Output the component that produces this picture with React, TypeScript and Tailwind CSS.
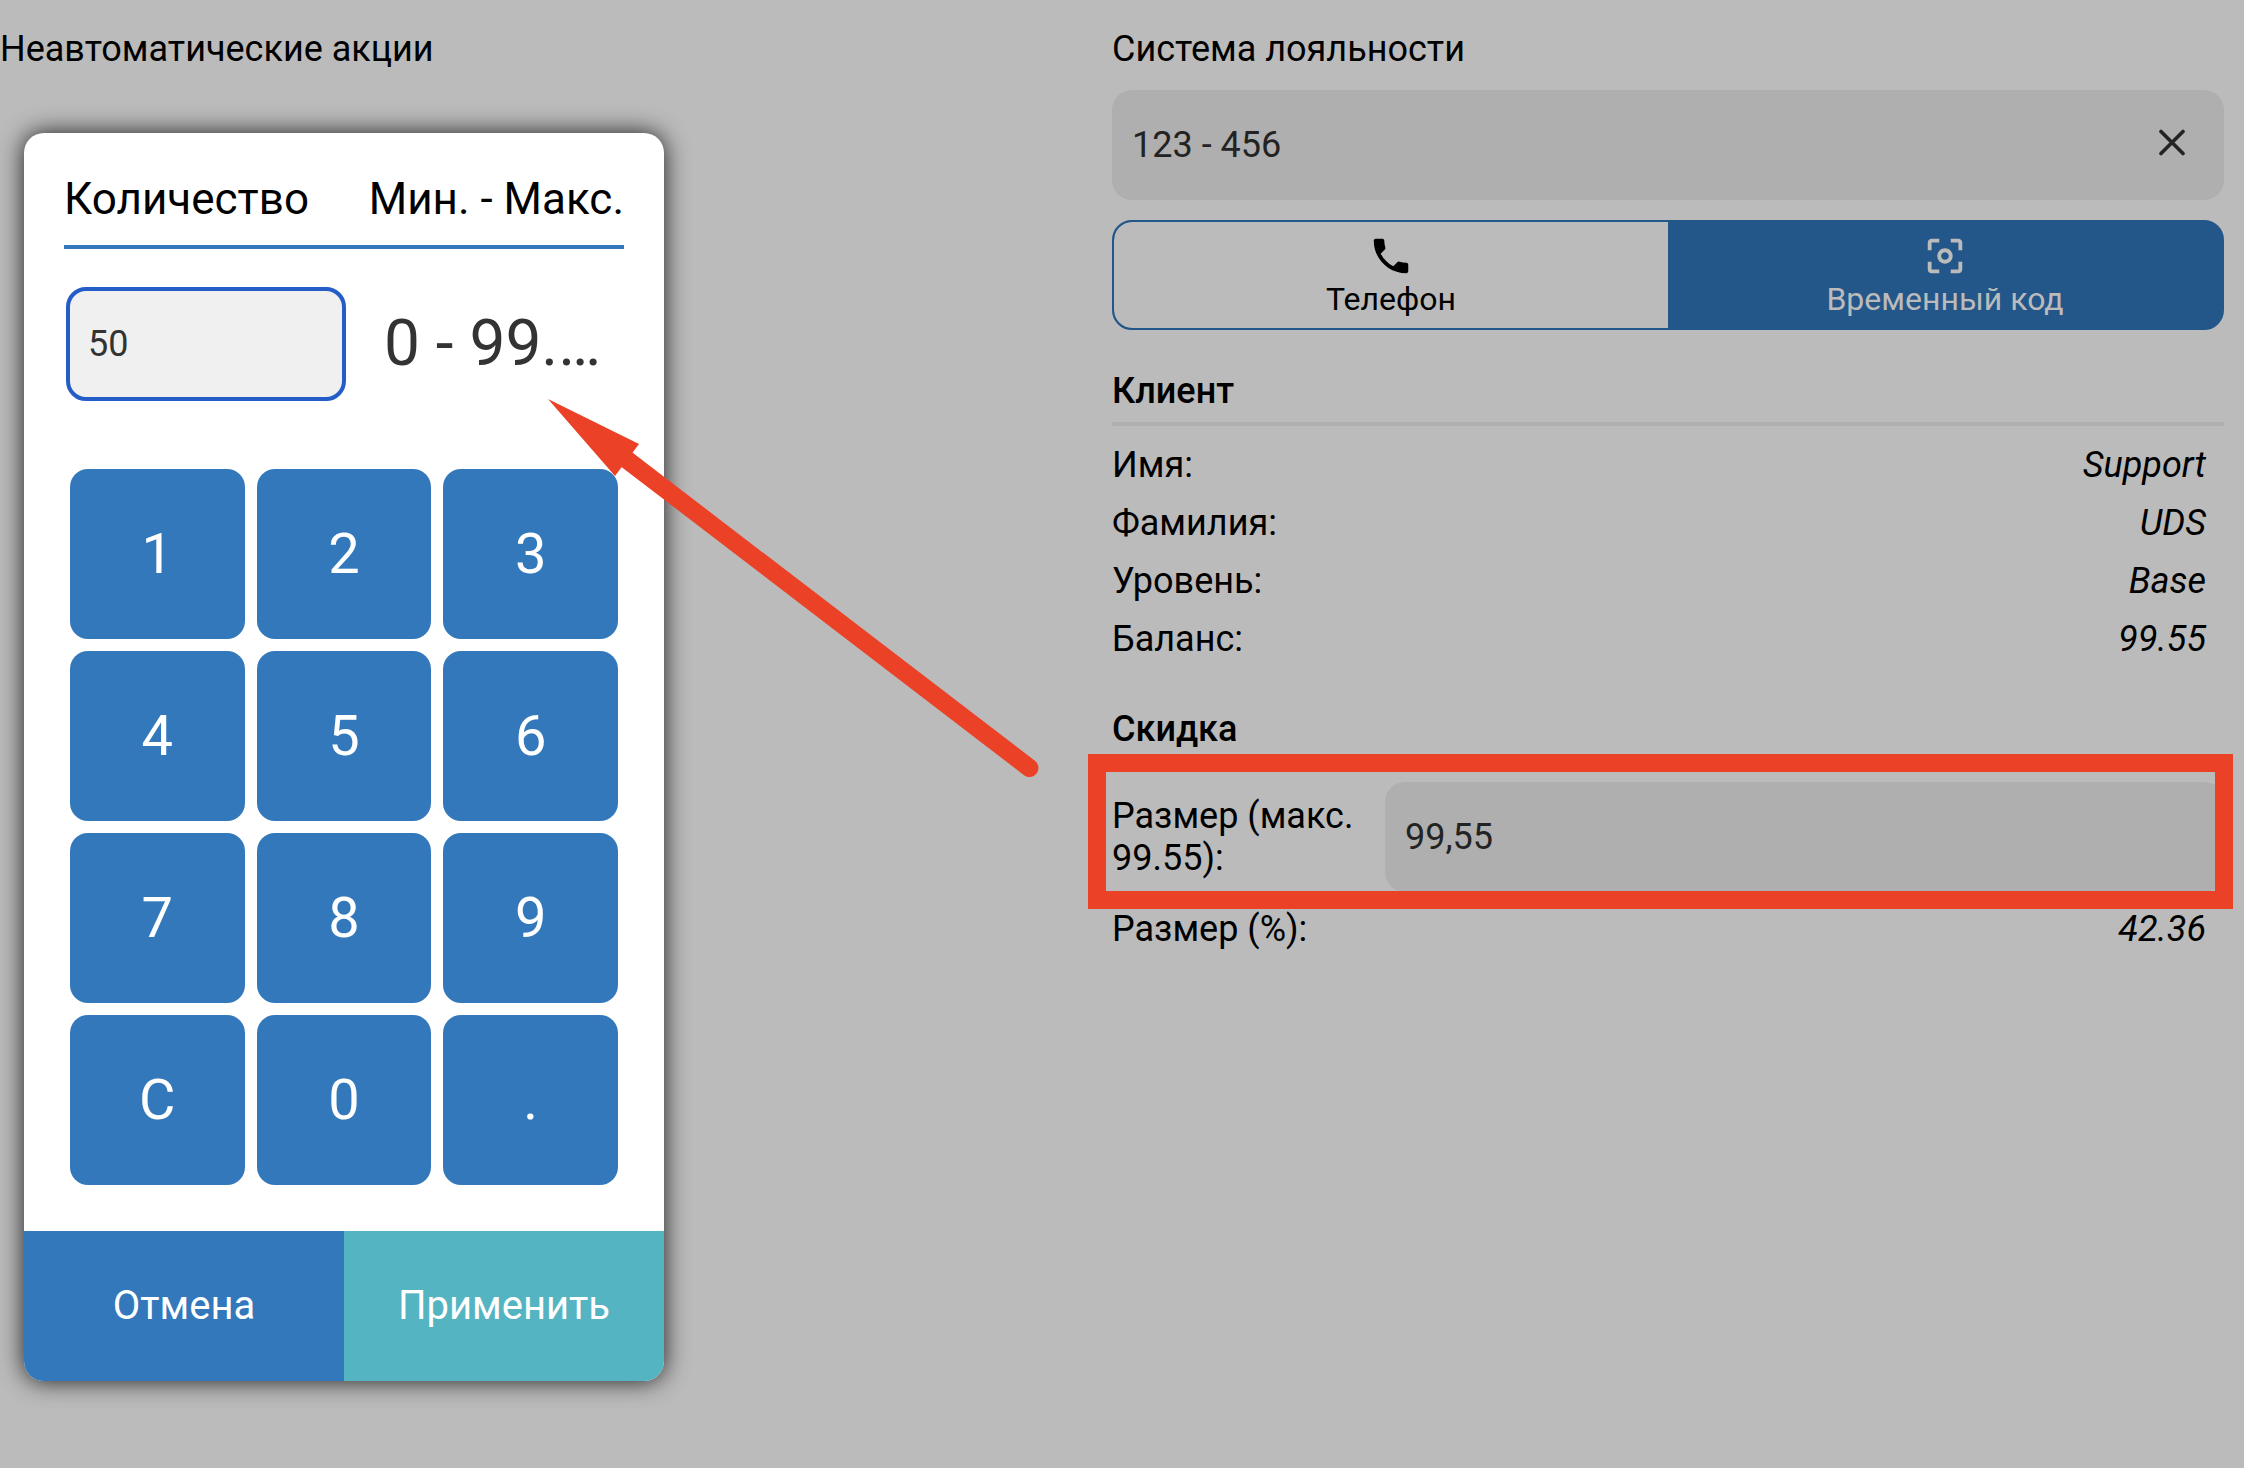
/**
 * Loyalty discount screen
 *
 * Shows the loyalty panel with client details and the quantity keypad
 * dialog that is opened over it.
 */

import React, { useState } from 'react';

interface DetailRowProps {
  label: string;
  value: string;
}

const KEYS = ['1', '2', '3', '4', '5', '6', '7', '8', '9', 'C', '0', '.'];

const CLIENT_ROWS: DetailRowProps[] = [
  { label: 'Имя:', value: 'Support' },
  { label: 'Фамилия:', value: 'UDS' },
  { label: 'Уровень:', value: 'Base' },
  { label: 'Баланс:', value: '99.55' },
];

const DetailRow: React.FC<DetailRowProps> = ({ label, value }) => (
  <div className="flex justify-between py-2 pr-[18px]">
    <dt>{label}</dt>
    <dd className="italic">{value}</dd>
  </div>
);

const SectionTitle: React.FC<{ children: React.ReactNode }> = ({ children }) => (
  <h2 className="mt-10 mb-[10px] border-b-4 border-[#afafaf] pb-[10px] font-medium">{children}</h2>
);

// Material style icons
const PhoneIcon = () => (
  <svg className="size-[46px]" viewBox="0 0 24 24" fill="currentColor" aria-hidden="true">
    <path d="M6.62 10.79c1.44 2.83 3.76 5.14 6.59 6.59l2.2-2.2c.27-.27.67-.36 1.02-.24 1.12.37 2.33.57 3.57.57.55 0 1 .45 1 1V20c0 .55-.45 1-1 1-9.39 0-17-7.61-17-17 0-.55.45-1 1-1h3.5c.55 0 1 .45 1 1 0 1.25.2 2.45.57 3.57.11.35.03.74-.25 1.02l-2.2 2.2z" />
  </svg>
);

const ScanIcon = () => (
  <svg className="size-[46px]" viewBox="0 0 24 24" fill="currentColor" aria-hidden="true">
    <path d="M5 15H3v4c0 1.1.9 2 2 2h4v-2H5v-4zM5 5h4V3H5c-1.1 0-2 .9-2 2v4h2V5zm14-2h-4v2h4v4h2V5c0-1.1-.9-2-2-2zm0 16h-4v2h4c1.1 0 2-.9 2-2v-4h-2v4zM12 8c-2.21 0-4 1.79-4 4s1.79 4 4 4 4-1.79 4-4-1.79-4-4-4zm0 6c-1.1 0-2-.9-2-2s.9-2 2-2 2 .9 2 2-.9 2-2 2z" />
  </svg>
);

const CloseIcon = () => (
  <svg className="size-7" viewBox="0 0 28 28" fill="none" stroke="currentColor" strokeWidth="3.6" strokeLinecap="round" aria-hidden="true">
    <path d="M3 2.5l22 22M25 2.5l-22 22" />
  </svg>
);

/**
 * Loyalty panel
 * Card code, identification mode, client details and discount
 */
const LoyaltyPanel: React.FC = () => {
  const [code, setCode] = useState('123 - 456');
  const [discount, setDiscount] = useState('99,55');

  return (
    <section>
      <label htmlFor="code" className="block">Система лояльности</label>
      <div className="mt-5 flex h-[110px] items-center rounded-[20px] bg-[#afafaf] pr-[38px] text-[#232323]">
        <input
          id="code"
          className="h-full min-w-0 flex-1 bg-transparent px-5 outline-none"
          value={code}
          onChange={(e) => setCode(e.target.value)}
        />
        <button type="button" aria-label="Очистить" className="pb-1" onClick={() => setCode('')}>
          <CloseIcon />
        </button>
      </div>

      {/* Identification mode */}
      <div className="mt-5 grid h-[110px] grid-cols-2 overflow-hidden rounded-[20px] border-2 border-[#235789] bg-[#235789] text-[32px] leading-9">
        <button type="button" className="flex flex-col items-center justify-center gap-[2px] rounded-l-[18px] bg-[#bbbbbb]">
          <PhoneIcon />
          Телефон
        </button>
        <button type="button" className="flex flex-col items-center justify-center gap-[2px] text-[#bbbbbb]">
          <ScanIcon />
          Временный код
        </button>
      </div>

      <SectionTitle>Клиент</SectionTitle>
      <dl>
        {CLIENT_ROWS.map((row) => (
          <DetailRow key={row.label} label={row.label} value={row.value} />
        ))}
      </dl>

      <SectionTitle>Скидка</SectionTitle>
      <div className="relative flex items-center py-2">
        <label htmlFor="discount" className="w-[273px] shrink-0">Размер (макс. 99.55):</label>
        <input
          id="discount"
          className="h-[110px] min-w-0 flex-1 rounded-[20px] bg-[#afafaf] px-5 text-[#232323] outline-none"
          value={discount}
          onChange={(e) => setDiscount(e.target.value)}
        />
        {/* Highlight frame */}
        <div className="pointer-events-none absolute -top-5 -right-[9px] -bottom-[9px] -left-6 border-[18px] border-[#eb4127]" />
      </div>
      <dl>
        <DetailRow label="Размер (%):" value="42.36" />
      </dl>
    </section>
  );
};

/**
 * Quantity dialog
 * Numeric keypad with the allowed range next to the entered amount
 */
const QuantityDialog: React.FC = () => {
  const [amount, setAmount] = useState('50');

  const handleKey = (key: string) => {
    setAmount(key === 'C' ? '' : amount + key);
  };

  return (
    <div
      role="dialog"
      className="absolute top-[133px] left-6 w-[640px] overflow-hidden rounded-[20px] bg-white shadow-[0_0_24px_rgba(0,0,0,0.85)]"
    >
      <div className="px-10 pt-10">
        <div className="flex justify-between border-b-4 border-[#3378bb] pb-5 text-[44px] leading-[52px]">
          <label htmlFor="amount">Количество</label>
          <span>Мин. - Макс.</span>
        </div>
        <div className="mt-[38px] flex items-center pl-[2px] text-[#333333]">
          <input
            id="amount"
            className="h-[114px] w-[280px] rounded-[20px] border-4 border-[#245cc8] bg-[#f0f0f0] px-[18px] outline-none"
            value={amount}
            onChange={(e) => setAmount(e.target.value)}
          />
          <span className="pl-[38px] text-[64px] leading-[76px] whitespace-nowrap">0 - 99.…</span>
        </div>
      </div>

      {/* Keypad */}
      <div className="mt-[68px] mb-[46px] grid grid-cols-3 gap-3 px-[46px]">
        {KEYS.map((key) => (
          <button
            key={key}
            type="button"
            className="h-[170px] rounded-[18px] bg-[#3378bb] text-[56px] text-white"
            onClick={() => handleKey(key)}
          >
            {key}
          </button>
        ))}
      </div>

      <div className="grid h-[150px] grid-cols-2 text-[40px] text-white">
        <button type="button" className="bg-[#3378bb]">Отмена</button>
        <button type="button" className="bg-[#54b4c1]">Применить</button>
      </div>
    </div>
  );
};

// Arrow from the discount field to the range in the dialog
const Arrow = () => (
  <svg
    className="pointer-events-none absolute top-[399px] left-[548px] h-[380px] w-[494px]"
    viewBox="548 399 494 380"
    fill="#eb4127"
    aria-hidden="true"
  >
    <path d="M548 399L639 444L615 476Z" />
    <path d="M622 456L1029.5 768" stroke="#eb4127" strokeWidth="18" strokeLinecap="round" />
  </svg>
);

const App: React.FC = () => {
  return (
    <main className="relative min-h-screen bg-[#bbbbbb] font-['Roboto',sans-serif] text-[36px] leading-[42px] text-black">
      <div className="grid grid-cols-2 pt-7 pr-5">
        <h1>Неавтоматические акции</h1>
        <LoyaltyPanel />
      </div>
      <QuantityDialog />
      <Arrow />
    </main>
  );
};

export default App;
